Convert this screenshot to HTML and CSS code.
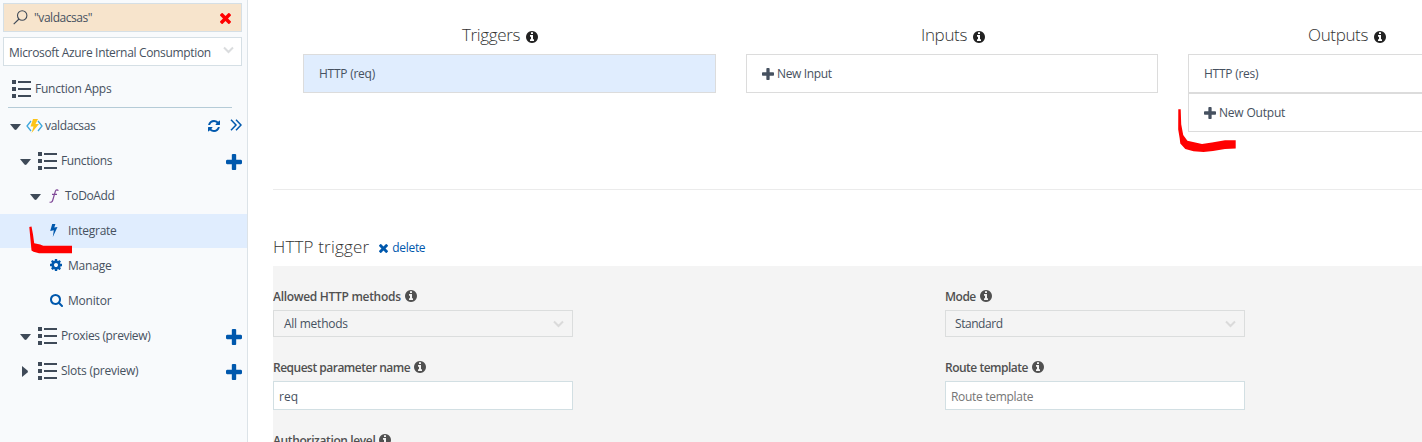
FILE: index.html
```html
<!DOCTYPE html>
<html lang="en">
<head>
<meta charset="utf-8">
<title>Function Apps</title>
<link rel="stylesheet" href="styles.css">
</head>
<body>
<svg class="sprite" aria-hidden="true">
  <symbol id="info" viewBox="128 128 1536 1536"><path d="M1152 1376v-160q0-14-9-23t-23-9h-96v-512q0-14-9-23t-23-9h-320q-14 0-23 9t-9 23v160q0 14 9 23t23 9h96v320h-96q-14 0-23 9t-9 23v160q0 14 9 23t23 9h448q14 0 23-9t9-23zm-128-896v-160q0-14-9-23t-23-9h-192q-14 0-23 9t-9 23v160q0 14 9 23t23 9h192q14 0 23-9t9-23zm640 416q0 209-103 385.5t-279.5 279.5-385.5 103-385.5-103-279.5-279.5-103-385.5 103-385.5 279.5-279.5 385.5-103 385.5 103 279.5 279.5 103 385.5z"/></symbol>
  <symbol id="times" viewBox="302 366 1188 1188"><path d="M1490 1322q0 40-28 68l-136 136q-28 28-68 28t-68-28l-294-294-294 294q-28 28-68 28t-68-28l-136-136q-28-28-28-68t28-68l294-294-294-294q-28-28-28-68t28-68l136-136q28-28 68-28t68 28l294 294 294-294q28-28 68-28t68 28l136 136q28 28 28 68t-28 68l-294 294 294 294q28 28 28 68z"/></symbol>
  <symbol id="plus" viewBox="192 128 1408 1408"><path d="M1600 736v192q0 40-28 68t-68 28h-416v416q0 40-28 68t-68 28h-192q-40 0-68-28t-28-68v-416h-416q-40 0-68-28t-28-68v-192q0-40 28-68t68-28h416v-416q0-40 28-68t68-28h192q40 0 68 28t28 68v416h416q40 0 68 28t28 68z"/></symbol>
  <symbol id="refresh" viewBox="128 128 1536 1536"><path d="M1639 1056q0 5-1 7-64 268-268 434.5t-478 166.5q-146 0-282.5-55t-243.5-157l-129 129q-19 19-45 19t-45-19-19-45v-448q0-26 19-45t45-19h448q26 0 45 19t19 45-19 45l-137 137q71 66 161 102t187 36q134 0 250-65t186-179q11-17 53-117 8-23 30-23h192q13 0 22.5 9.5t9.5 22.5zm25-800v448q0 26-19 45t-45 19h-448q-26 0-45-19t-19-45 19-45l138-138q-148-137-349-137-134 0-250 65t-186 179q-11 17-53 117-8 23-30 23h-199q-13 0-22.5-9.5t-9.5-22.5v-7q65-268 270-434.5t480-166.5q146 0 284 55.5t245 156.5l130-129q19-19 45-19t45 19 19 45z"/></symbol>
  <symbol id="cog" viewBox="128 128 1536 1536"><path d="M1152 896q0-106-75-181t-181-75-181 75-75 181 75 181 181 75 181-75 75-181zm512-109v222q0 12-8 23t-20 13l-185 28q-19 54-39 91 35 50 107 138 10 12 10 25t-9 23q-27 37-99 108t-94 71q-12 0-26-9l-138-108q-44 23-91 38-16 136-29 186-7 28-36 28h-222q-14 0-24.5-8.5t-11.5-21.5l-28-184q-49-16-90-37l-141 107q-10 9-25 9-14 0-25-11-126-114-165-168-7-10-7-23 0-12 8-23 15-21 51-66.5t54-70.5q-27-50-41-99l-183-27q-13-2-21-12.5t-8-23.5v-222q0-12 8-23t19-13l186-28q14-46 39-92-40-57-107-138-10-12-10-24 0-10 9-23 26-36 98.5-107.5t94.5-71.5q13 0 26 10l138 107q44-23 91-38 16-136 29-186 7-28 36-28h222q14 0 24.5 8.5t11.5 21.5l28 184q49 16 90 37l142-107q9-9 24-9 13 0 25 10 129 119 165 170 7 8 7 22 0 12-8 23-15 21-51 66.5t-54 70.5q26 50 41 98l183 28q13 2 21 12.5t8 23.5z"/></symbol>
  <symbol id="search" viewBox="64 128 1664 1664"><path d="M1216 832q0-185-131.500-316.500t-316.500-131.500-316.500 131.500-131.500 316.500 131.500 316.500 316.500 131.500 316.500-131.500 131.500-316.500zm512 832q0 52-38 90t-90 38q-54 0-90-38l-343-342q-179 124-399 124-143 0-273.500-55.500t-225-150-150-225-55.500-273.500 55.500-273.500 150-225 225-150 273.500-55.500 273.500 55.500 225 150 150 225 55.500 273.500q0 220-124 399l343 343q37 37 37 90z"/></symbol>
  <symbol id="list" viewBox="0 0 19 18"><path d="M0 0h4v4H0zM6 1h13v2H6zM0 7h4v4H0zM6 8h13v2H6zM0 14h4v4H0zM6 15h13v2H6z"/></symbol>
  <symbol id="down" viewBox="0 0 11 6"><path d="M0 0h11L6.500 5.500q-1 .8-2 0z"/></symbol>
  <symbol id="right" viewBox="0 0 6 11"><path d="M0 0v11l5.500-4.500q.8-1 0-2z"/></symbol>
  <symbol id="chevron" viewBox="0 0 11 8"><path d="M1 1.500l4.500 4.500L10 1.500" fill="none" stroke="currentColor" stroke-width="2"/></symbol>
</svg>

<div class="app">
  <nav class="sidebar">
    <div class="box search-box">
      <svg class="lens" viewBox="0 0 15 15"><circle cx="9.200" cy="5.500" r="4.700"/><path d="M6 9L.7 14.200"/></svg>
      <span class="t-search">"valdacsas"</span>
      <svg class="clear"><use href="#times"/></svg>
    </div>
    <div class="box subscription">
      <span class="t-sub">Microsoft Azure Internal Consumption</span>
      <svg class="chev"><use href="#chevron"/></svg>
    </div>
    <div class="apps-row"><svg class="list"><use href="#list"/></svg><span class="t-apps">Function Apps</span></div>
    <div class="tree">
      <div class="row level0">
        <svg class="down"><use href="#down"/></svg>
        <svg class="func-logo" viewBox="0 0 17 14"><path d="M5 2L1 7l4 5M12 2l4 5-4 5" fill="none" stroke="#3ea7dc" stroke-width="1.300"/><path d="M7 0h5L9.500 5H13L5.500 14l2-6.500H4.500z" fill="#fcc419"/></svg>
        <span class="t-app">valdacsas</span>
        <span class="tools">
          <svg class="refresh"><use href="#refresh"/></svg>
          <svg class="more" viewBox="0 0 12 12"><path d="M1 .8L6 6l-5 5.200M6 .8L11 6l-5 5.200" fill="none" stroke="currentColor" stroke-width="1.500"/></svg>
        </span>
      </div>
      <div class="row level1"><svg class="down"><use href="#down"/></svg><svg class="list"><use href="#list"/></svg><span class="t-functions">Functions</span><svg class="add"><use href="#plus"/></svg></div>
      <div class="row level2"><svg class="down"><use href="#down"/></svg><svg class="fx" viewBox="0 0 10 14"><path d="M9.300 1.700C8.600.4 7 .5 6.300 2.400L3.800 11c-.5 2-1.800 2.700-3.200 1.900M3 5.300h5" fill="none" stroke="currentColor" stroke-width="1.200"/></svg><span class="t-todo">ToDoAdd</span></div>
      <div class="row level3 active"><svg class="bolt" viewBox="0 0 8 13"><path d="M2.200 0h3.200L4.300 3.600l3.200-.7L2.800 13l1-6.700-3.600.8z"/></svg><span class="t-integrate">Integrate</span></div>
      <div class="row level3"><svg class="cog"><use href="#cog"/></svg><span class="t-manage">Manage</span></div>
      <div class="row level3"><svg class="mag"><use href="#search"/></svg><span class="t-monitor">Monitor</span></div>
      <div class="row level1"><svg class="down"><use href="#down"/></svg><svg class="list"><use href="#list"/></svg><span class="t-proxies">Proxies (preview)</span><svg class="add"><use href="#plus"/></svg></div>
      <div class="row level1"><svg class="right"><use href="#right"/></svg><svg class="list"><use href="#list"/></svg><span class="t-slots">Slots (preview)</span><svg class="add"><use href="#plus"/></svg></div>
    </div>
  </nav>

  <main class="main">
    <section class="bindings">
      <div class="column triggers">
        <h2><span>Triggers</span><svg class="info"><use href="#info"/></svg></h2>
        <div class="card selected"><span class="t-req">HTTP (req)</span></div>
      </div>
      <div class="column inputs">
        <h2><span>Inputs</span><svg class="info"><use href="#info"/></svg></h2>
        <div class="card new"><svg class="plus"><use href="#plus"/></svg><span class="t-newin">New Input</span></div>
      </div>
      <div class="column outputs">
        <h2><span>Outputs</span><svg class="info"><use href="#info"/></svg></h2>
        <div class="card"><span class="t-res">HTTP (res)</span></div>
        <div class="card new"><svg class="plus"><use href="#plus"/></svg><span class="t-newout">New Output</span></div>
      </div>
    </section>
    <section class="detail">
      <header class="detail-head"><h2><span class="t-trigger">HTTP trigger</span></h2><a class="delete"><svg><use href="#times"/></svg><span>delete</span></a></header>
      <div class="form">
        <div class="field"><label><span class="l-methods">Allowed HTTP methods</span><svg class="info"><use href="#info"/></svg></label><div class="select"><span class="t-all">All methods</span><svg class="chev"><use href="#chevron"/></svg></div></div>
        <div class="field"><label><span class="l-mode">Mode</span><svg class="info"><use href="#info"/></svg></label><div class="select"><span class="t-standard">Standard</span><svg class="chev"><use href="#chevron"/></svg></div></div>
        <div class="field"><label><span class="l-param">Request parameter name</span><svg class="info"><use href="#info"/></svg></label><div class="input"><span>req</span></div></div>
        <div class="field"><label><span class="l-route">Route template</span><svg class="info"><use href="#info"/></svg></label><div class="input placeholder"><span class="t-route">Route template</span></div></div>
        <div class="field"><label><span class="l-auth">Authorization level</span><svg class="info"><use href="#info"/></svg></label></div>
      </div>
    </section>
  </main>
</div>
<svg class="marks" viewBox="0 0 1422 442" aria-hidden="true">
  <path d="M29.300 227l2.200-.5 1.500 8 1.200 8.800 6 1.200 3 1.300H72v7.500H39l-5.500-1.500-2-1.300z"/>
  <path d="M1178.300 109.300h2.400l.5 15 2 10.700 4.200 5.800L1202 144l10-1.400 13-2.400h10.700v8.200l-10.700.5-12 2.200-9.500.9-10-.7-8.200-2.300-5-5.600-.6-5-1.500-9z"/>
</svg>
</body>
</html>
```
FILE: styles.css
```css
* { box-sizing: border-box; }
body {
  margin: 0;
  width: 1422px;
  height: 442px;
  overflow: hidden;
  background: #fff;
  color: #465160;
  font: 12px/20px "Open Sans", "Noto Sans", sans-serif;
}
svg { display: block; flex: none; fill: currentColor; }
span { white-space: nowrap; }
.sprite { position: absolute; width: 0; height: 0; }
.app { display: flex; height: 442px; }

/* Sidebar */
.sidebar { flex: none; width: 248px; padding-top: 3px; background: #f8fafc; border-right: 1px solid #dce3e8; }
.box { display: flex; align-items: center; width: 239px; height: 29px; margin-left: 3px; border: 1px solid #d5dfe5; background: #fff; }
.search-box { padding-left: 9px; background: #f7e4cc; }
.lens { width: 15px; height: 15px; margin-right: 6px; fill: none; stroke: #3f4a58; stroke-width: 1.1; }
.clear { width: 11px; height: 11px; margin: 1px 10px 0 auto; color: #f00; }
.subscription { margin-top: 5px; padding: 2px 0 0 5px; }
.subscription .chev { margin: -5px 7px 0 auto; color: #dadcde; }
.chev { width: 11px; height: 8px; }
.apps-row { display: flex; align-items: center; width: 224px; height: 42px; margin-left: 8px; padding: 4px 0 0 4px; border-bottom: 1px solid #b5cbd7; }
.list { width: 19px; height: 18px; margin-right: 4px; }
.apps-row .list { color: #3f4a58; }
.tree { padding-top: 1px; }
.row { display: flex; align-items: center; height: 34px; margin-bottom: 1px; padding: 0 5px 1px 0; }
.active { background: #e0edfe; }
.row.level0 { padding-left: 10px; }
.row.level1 { padding-left: 20px; }
.row.level2 { padding-left: 30px; }
.row.level3 { padding-left: 50px; }
.level3 svg { color: #0058ad; }
.down { width: 11px; height: 6px; margin-top: 2px; color: #3f4a58; }
.right { width: 6px; height: 11px; margin: 2px 3px 0 2px; color: #3f4a58; }
.level1 .list { margin-left: 7px; color: #3f4a58; }
.func-logo { width: 17px; height: 14px; margin: 0 2px 0 5px; }
.tools { display: flex; align-items: center; gap: 10px; margin-left: auto; color: #0058ad; }
.refresh { width: 12px; height: 12px; }
.more { width: 12px; height: 12px; margin-top: -1px; }
.row .add { width: 16px; height: 16px; margin: 3px 0 0 auto; color: #0058ad; }
.fx { width: 10px; height: 14px; margin: 1px 6px 0 8px; color: #804998; }
.bolt { width: 8px; height: 13px; margin: 0 11px 0 0; }
.active .t-integrate { margin-left: -1px; }
.cog { width: 12px; height: 12px; margin: -1px 6px 0 0; }
.mag { width: 13px; height: 13px; margin: 0 5px 0 0; }

/* Tracking */
.t-search { letter-spacing: -.45px; }
.t-sub { letter-spacing: -.33px; }
.t-app, .t-functions, .t-proxies, .t-todo { letter-spacing: -.35px; }
.t-apps, .t-integrate, .t-slots { letter-spacing: -.25px; }
.t-manage, .t-monitor, .t-newout { letter-spacing: -.2px; }
.t-req, .t-res, .t-all { letter-spacing: -.25px; }
.t-newin { letter-spacing: -.35px; }
.t-standard { letter-spacing: -.45px; }
.t-route { letter-spacing: -.3px; }
.t-trigger { letter-spacing: .17px; }
.l-methods { letter-spacing: -.3px; }
.l-mode, .l-param, .l-route { letter-spacing: -.5px; }
.l-auth { letter-spacing: -.38px; }

/* Bindings */
.main { flex: 1; min-width: 0; padding-left: 25px; overflow: hidden; }
.bindings { display: grid; grid-template-columns: 413px 412px 412px; gap: 30px; height: 190px; padding: 24px 0 0 30px; border-bottom: 1px solid #ebebeb; }
h2 { display: flex; align-items: center; margin: 0; height: 22px; color: #333; font-size: 17px; font-weight: 300; line-height: 22px; }
.column h2 { margin-bottom: 8px; letter-spacing: -.35px; }
.triggers h2 { padding-left: 159px; }
.inputs h2 { padding-left: 175px; }
.outputs h2 { padding-left: 120px; }
.info { width: 12px; height: 12px; margin: -1px 0 0 4px; }
h2 .info { margin: 3px 0 0 6px; color: #222; }
.card { display: flex; align-items: center; height: 39px; padding-left: 15px; border: 1px solid #dcdcdc; }
.selected { background: #e0edfe; }
.plus { width: 12px; height: 12px; margin-right: 3px; }

/* Trigger details */
.detail-head { display: flex; align-items: center; height: 76px; padding-top: 38px; }
.delete { display: flex; align-items: center; gap: 4px; margin: 2px 0 0 10px; color: #0058ad; letter-spacing: -.3px; }
.delete svg { width: 9px; height: 9px; }
.form { display: grid; grid-template-columns: 300px 300px; column-gap: 372px; align-content: start; height: 176px; padding-top: 20px; background: #f4f4f4; overflow: hidden; }
.field { height: 71px; }
.field:nth-child(n+3) { height: 73px; }
label { display: flex; align-items: center; height: 20px; margin-bottom: 4px; padding-top: 1px; color: #505050; font-weight: 600; }
.select, .input { display: flex; align-items: center; border: 1px solid #dbdddd; }
.select { height: 27px; padding: 0 8px 0 10px; }
.field:nth-child(2) .select { padding-left: 9px; }
.select .chev { margin-left: auto; color: #dadada; }
.input { height: 29px; padding: 2px 5px 0; background: #fff; border-color: #d2dfe3; }
.placeholder { color: #757575; }

/* Red pen annotations */
.marks { position: absolute; left: 0; top: 0; width: 1422px; height: 442px; fill: #f00; pointer-events: none; }
```
